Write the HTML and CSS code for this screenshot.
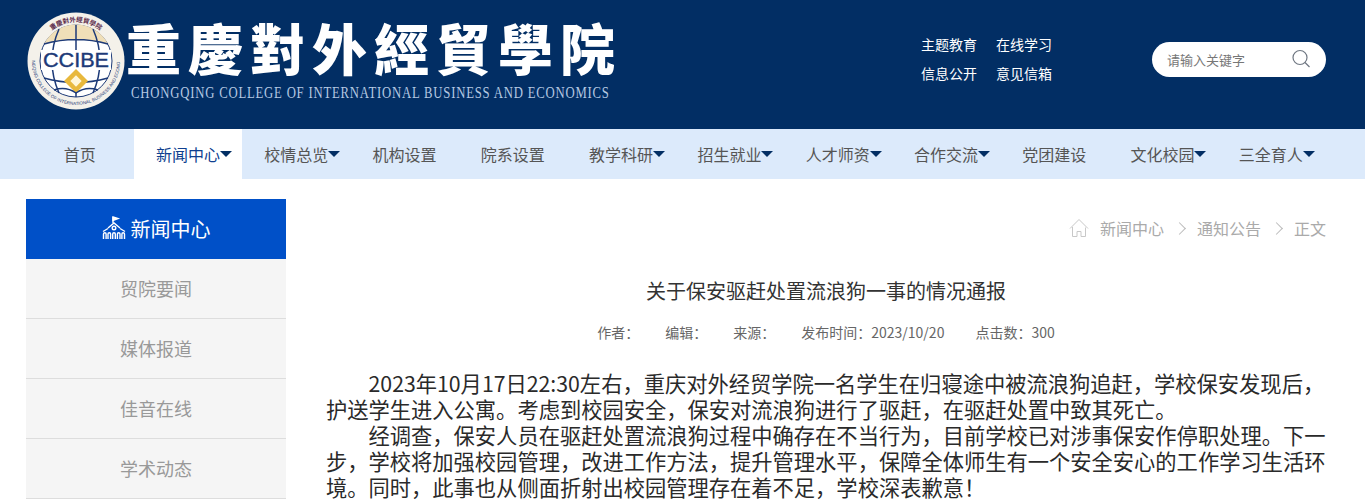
FILE: index.html
```html
<!DOCTYPE html>
<html lang="zh-CN">
<head>
    <meta charset="UTF-8">
    <meta name="viewport" content="width=device-width, initial-scale=1.0">
    <title>关于保安驱赶处置流浪狗一事的情况通报</title>
    <link rel="stylesheet" href="styles.css">
</head>
<body>

    <div class="header">
        <div class="brand">
            <svg class="logo" width="100" height="100" viewBox="0 0 100 100">
                <defs>
                    <path id="ring-top" d="M11 50a39 39 0 0 1 78 0"/>
                    <path id="ring-bottom" d="M6 50a44 44 0 0 0 88 0"/>
                </defs>
                <circle cx="50" cy="50" r="48.500" fill="#f4f1ea"/>
                <circle cx="50" cy="50" r="36" fill="#fff" stroke="#1d3a78" stroke-width="1"/>
                <path d="M18 33a36 36 0 0 1 64 0q-32-9-64 0z" fill="#f0dfb8"/>
                <path d="M50 14v72M18 33q32-9 64 0M18 67q32 9 64 0M33 18q-14 32 0 64M67 18q14 32 0 64" fill="none" stroke="#1d3a78" stroke-width="1.500"/>
                <text class="logo-top" font-size="6.500"><textPath href="#ring-top" startOffset="50%" text-anchor="middle">重慶對外經貿學院</textPath></text>
                <text class="logo-bottom" font-size="4.500"><textPath href="#ring-bottom" startOffset="50%" text-anchor="middle">CHONGQING COLLEGE OF INTERNATIONAL BUSINESS AND ECONOMICS</textPath></text>
                <rect x="15" y="39" width="70" height="20" fill="#fff"/>
                <text class="logo-mark" x="50" y="56" text-anchor="middle" font-size="20" textLength="66" lengthAdjust="spacingAndGlyphs">CCIBE</text>
                <path d="M50 58l12 12-12 12-12-12z" fill="#e8b83c"/>
                <rect x="46" y="66" width="8" height="8" fill="#fff6d8" transform="rotate(45 50 70)"/>
                <path d="M28 79q12-4 22 3 10-7 22-3" fill="none" stroke="#1d3a78" stroke-width="1.500"/>
            </svg>
            <div class="brand-text">
                <div class="brand-cn">重慶對外經貿學院</div>
                <div class="brand-en">CHONGQING COLLEGE OF INTERNATIONAL BUSINESS AND ECONOMICS</div>
            </div>
        </div>
        <div class="top-links">
            <a href="#">主题教育</a>
            <a href="#">在线学习</a>
            <a href="#">信息公开</a>
            <a href="#">意见信箱</a>
        </div>
        <div class="search-bar">
            <input type="text" placeholder="请输入关键字">
            <svg width="20" height="20" viewBox="0 0 20 20" fill="none" stroke="#6f7782" stroke-width="1.200">
                <circle cx="9" cy="8.500" r="7"/>
                <path d="M14 13.500l4.500 4.500"/>
            </svg>
        </div>
    </div>

    <div class="nav">
        <a href="#">首页</a>
        <a href="#" class="active has-menu">新闻中心</a>
        <a href="#" class="has-menu">校情总览</a>
        <a href="#">机构设置</a>
        <a href="#">院系设置</a>
        <a href="#" class="has-menu">教学科研</a>
        <a href="#" class="has-menu">招生就业</a>
        <a href="#" class="has-menu">人才师资</a>
        <a href="#" class="has-menu">合作交流</a>
        <a href="#">党团建设</a>
        <a href="#" class="has-menu">文化校园</a>
        <a href="#" class="has-menu">三全育人</a>
    </div>

    <div class="main">
        <div class="sidebar">
            <div class="side-title">
                <svg width="24" height="24" viewBox="0 0 24 24" fill="none" stroke="#fff" stroke-width="1.400">
                    <path d="M11 1v6"/>
                    <path d="M11 1l5 1.500-5 2z" fill="#fff"/>
                    <path d="M6 12l6-5 6 5M1 15.500l5-3M18 12.500l5 3"/>
                    <circle cx="12" cy="12" r="1.800"/>
                    <path d="M1.500 23v-5a1.300 1.300 0 0 1 2.600 0v5M6 23v-5a1.300 1.300 0 0 1 2.600 0v5M10.700 23v-5a1.300 1.300 0 0 1 2.600 0v5M15.400 23v-5a1.300 1.300 0 0 1 2.600 0v5M19.900 23v-5a1.300 1.300 0 0 1 2.600 0v5"/>
                </svg>
                <span>新闻中心</span>
            </div>
            <a href="#" class="side-item">贸院要闻</a>
            <a href="#" class="side-item">媒体报道</a>
            <a href="#" class="side-item">佳音在线</a>
            <a href="#" class="side-item">学术动态</a>
        </div>

        <div class="content">
            <div class="crumbs">
                <svg width="20" height="20" viewBox="0 0 20 20" fill="none" stroke="#c8c8c8" stroke-width="1">
                    <path d="M1 10.500l9-9 9 9"/>
                    <path d="M3.500 9v9.500h4.500v-5h4v5h4.500v-9"/>
                </svg>
                <span class="crumb-first">新闻中心</span>
                <i class="chevron"></i>
                <span>通知公告</span>
                <i class="chevron"></i>
                <span>正文</span>
            </div>
            <h1 class="title">关于保安驱赶处置流浪狗一事的情况通报</h1>
            <div class="meta">
                <span>作者：</span>
                <span>编辑：</span>
                <span>来源：</span>
                <span class="meta-date">发布时间：2023/10/20</span>
                <span>点击数：300</span>
            </div>
            <div class="article">
                <p>2023年10月17日22:30左右，重庆对外经贸学院一名学生在归寝途中被流浪狗追赶，学校保安发现后，护送学生进入公寓。考虑到校园安全，保安对流浪狗进行了驱赶，在驱赶处置中致其死亡。</p>
                <p>经调查，保安人员在驱赶处置流浪狗过程中确存在不当行为，目前学校已对涉事保安作停职处理。下一步，学校将加强校园管理，改进工作方法，提升管理水平，保障全体师生有一个安全安心的工作学习生活环境。同时，此事也从侧面折射出校园管理存在着不足，学校深表歉意！</p>
            </div>
        </div>
    </div>

</body>
</html>
```

FILE: styles.css
```css
body {
    font-family: "Noto Sans CJK SC", "Liberation Sans", sans-serif;
    background-color: #fff;
    margin: 0;
    padding: 0;
    color: #333;
}

a {
    color: inherit;
    text-decoration: none;
}

.header {
    display: flex;
    align-items: center;
    height: 129px;
    padding: 0 39px 0 26px;
    background-color: #022e64;
}

.brand {
    display: flex;
    align-items: flex-start;
    width: 895px;
    height: 100px;
    margin-top: -7px;
}

.logo {
    flex: none;
}

.logo-top {
    font-family: "Noto Sans CJK SC", sans-serif;
    font-weight: 700;
    fill: #5a2a4a;
}

.logo-bottom {
    font-family: "Liberation Sans", sans-serif;
    fill: #1d3a78;
}

.logo-mark {
    font-family: "Liberation Sans", sans-serif;
    fill: #1d3a78;
    stroke: #1d3a78;
    stroke-width: 0.4px;
}

.brand-cn {
    margin-top: 4px;
    font-family: "Noto Sans CJK TC", sans-serif;
    font-size: 55px;
    font-weight: 900;
    line-height: 62px;
    letter-spacing: 7px;
    white-space: nowrap;
    color: #fff;
}

.brand-en {
    margin: 8px 0 0 5px;
    font-family: "Liberation Serif", serif;
    font-size: 16px;
    line-height: 16px;
    letter-spacing: 1px;
    white-space: nowrap;
    color: #b4c8e2;
    transform: scaleX(0.795);
    transform-origin: left center;
}

.top-links {
    display: grid;
    grid-template-columns: 56px 56px;
    column-gap: 19px;
    row-gap: 9px;
    width: 131px;
    margin-top: -13px;
    font-size: 14px;
    line-height: 20px;
    color: #fff;
}

.search-bar {
    display: flex;
    align-items: center;
    justify-content: space-between;
    width: 174px;
    height: 35px;
    margin: -11px 0 0 100px;
    padding: 0 15px 0 15px;
    box-sizing: border-box;
    background-color: #fff;
    border-radius: 18px;
}

.search-bar input {
    width: 110px;
    padding: 0;
    border: none;
    outline: none;
    font-family: inherit;
    font-size: 13px;
}

.search-bar input::placeholder {
    color: #777;
}

.nav {
    display: grid;
    grid-template-columns: repeat(12, 1fr);
    height: 50px;
    padding: 0 40px 0 25.5px;
    background-color: #dceafb;
}

.nav a {
    position: relative;
    font-size: 16px;
    line-height: 50px;
    text-align: center;
    color: #555;
}

.nav a.active {
    background-color: #fff;
    color: #0f3f8f;
}

.nav a.has-menu::after {
    content: "";
    position: absolute;
    top: 22px;
    left: 86px;
    border-top: 6px solid #022e64;
    border-left: 6px solid transparent;
    border-right: 6px solid transparent;
}

.main {
    display: flex;
    gap: 40px;
    padding: 20px 39px 0 26px;
}

.sidebar {
    flex: none;
    width: 260px;
}

.side-title {
    display: flex;
    align-items: center;
    justify-content: center;
    gap: 5px;
    height: 58px;
    padding-bottom: 2px;
    background-color: #0050c8;
    font-size: 20px;
    color: #fff;
}

.side-item {
    display: block;
    height: 59px;
    border-bottom: 1px solid #ddd;
    background-color: #f5f5f5;
    font-size: 18px;
    line-height: 58px;
    text-align: center;
    color: #999;
}

.content {
    flex: 1;
    min-width: 0;
}

.crumbs {
    display: flex;
    align-items: center;
    justify-content: flex-end;
    gap: 9px;
    height: 58px;
    padding-bottom: 2px;
    font-size: 16px;
    color: #aaa;
}

.crumb-first {
    margin-left: 2px;
}

.chevron {
    width: 8px;
    height: 8px;
    margin: 0 4px 0 2px;
    border-top: 1px solid #bbb;
    border-right: 1px solid #bbb;
    transform: rotate(45deg);
}

.title {
    margin: 18px 0 0 0;
    font-size: 20px;
    font-weight: 400;
    line-height: 28px;
    text-align: center;
    color: #333;
}

.meta {
    display: flex;
    justify-content: center;
    gap: 26px;
    margin-top: 15px;
    font-size: 14px;
    line-height: 24px;
    color: #666;
}

.meta-date {
    margin-right: 5px;
}

.article {
    margin-top: 26px;
    font-size: 21.27px;
    line-height: 26px;
    color: #2a2a2a;
}

.article p {
    margin: 0;
    text-indent: 2em;
}
```
